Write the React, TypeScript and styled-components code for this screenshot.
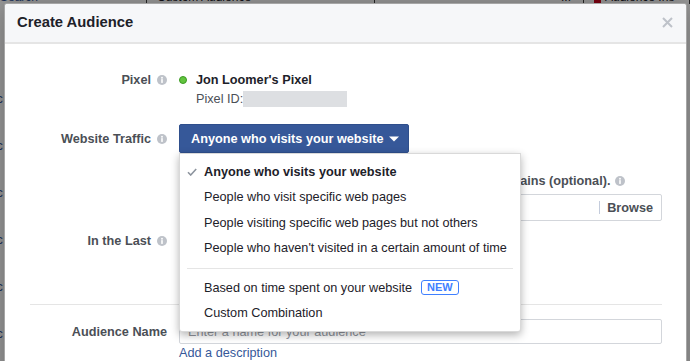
import React from "react";
import styled, { createGlobalStyle } from "styled-components";

const Global = createGlobalStyle`
  html, body { margin: 0; padding: 0; width: 690px; height: 361px; overflow: hidden; }
  body { font-family: "Liberation Sans", Arial, Helvetica, sans-serif; background: #fff; }
  * { box-sizing: border-box; }
`;

const Page = styled.div`
  position: relative;
  width: 690px;
  height: 361px;
  overflow: hidden;
  background: #fff;
`;

const BgHeader = styled.div`
  display: grid;
  grid-template-columns: 147px 228px 209px 1fr;
  height: 13px;
  margin-top: -9px;
  font-size: 12px;
  line-height: 13px;
  color: #1d2129;
`;

const BgCell = styled.div<{ $first?: boolean; $end?: boolean }>`
  display: flex;
  align-items: center;
  justify-content: ${(p) => (p.$end ? "flex-end" : "flex-start")};
  gap: 4px;
  padding-left: ${(p) => (p.$first ? "0" : "10px")};
  padding-right: ${(p) => (p.$end ? "12px" : "0")};
  border-right: 1px solid #444;
  color: ${(p) => (p.$first ? "#365899" : "#1d2129")};
`;

const RedMark = styled.span`
  width: 7px;
  height: 10px;
  background: #d0021b;
`;

const BgList = styled.div`
  margin-top: 71px;
  display: flex;
  flex-direction: column;
`;

const BgRow = styled.div`
  height: 47px;
  display: flex;
  align-items: center;
  margin-left: -6px;
  font-size: 12px;
  color: #365899;
`;

const Backdrop = styled.div`
  position: absolute;
  inset: 0;
  background: rgba(0, 0, 0, 0.4);
`;

const Modal = styled.div`
  position: absolute;
  left: 4px;
  top: 3px;
  width: 683px;
  height: 420px;
  background: #fff;
  border: 1px solid rgba(0, 0, 0, 0.35);
  border-radius: 3px;
  box-shadow: 0 2px 26px rgba(0, 0, 0, 0.3);
`;

const Header = styled.div`
  height: 40px;
  display: flex;
  align-items: center;
  justify-content: space-between;
  padding: 0 13px 2px 12px;
  background: #f6f7f9;
  border-bottom: 2px solid #e5e5e5;
  border-radius: 3px 3px 0 0;
`;

const Title = styled.div`
  font-size: 14.8px;
  font-weight: bold;
  color: #1d2129;
`;

const Body = styled.div`
  padding: 28px 24px 0 25px;
  font-size: 12.7px;
  color: #1d2129;
`;

const FormRow = styled.div<{ $mt?: number }>`
  display: grid;
  grid-template-columns: 138px 1fr;
  column-gap: 11px;
  align-items: start;
  margin-top: ${(p) => p.$mt ?? 0}px;
`;

const Label = styled.div<{ $h: number }>`
  height: ${(p) => p.$h}px;
  display: flex;
  justify-content: flex-end;
  align-items: center;
  gap: 6px;
  padding-right: 1px;
  font-weight: bold;
  color: #4b4f56;
  white-space: nowrap;
`;

const Content = styled.div`
  display: flex;
  flex-direction: column;
  align-items: flex-start;
`;

const Line = styled.div<{ $indent?: number; $mt?: number; $bold?: boolean; $color?: string; $gap?: number }>`
  height: 16px;
  display: flex;
  align-items: center;
  gap: ${(p) => p.$gap ?? 0}px;
  padding-left: ${(p) => p.$indent ?? 0}px;
  margin-top: ${(p) => p.$mt ?? 0}px;
  font-weight: ${(p) => (p.$bold ? "bold" : "normal")};
  color: ${(p) => p.$color ?? "#1d2129"};
  white-space: nowrap;
`;

const Dot = styled.span`
  width: 8px;
  height: 8px;
  border-radius: 50%;
  background: #62c43f;
  border: 1px solid #3b9a22;
  margin-right: 9px;
`;

const RedactedId = styled.span`
  width: 104px;
  height: 16px;
  background: #dddfe2;
`;

const Anchor = styled.div`
  position: relative;
`;

const BlueButton = styled.div`
  height: 29px;
  display: flex;
  align-items: center;
  gap: 6px;
  padding: 0 9px 0 11px;
  background: #365899;
  border: 1px solid #2f4f8c;
  border-radius: 2px;
  color: #fff;
  font-weight: bold;
  white-space: nowrap;
`;

const Menu = styled.div`
  position: absolute;
  top: 100%;
  left: 0;
  width: 342px;
  padding: 5px 0;
  background: #fff;
  border: 1px solid rgba(0, 0, 0, 0.15);
  border-radius: 0 0 3px 3px;
  box-shadow: 0 3px 8px rgba(0, 0, 0, 0.3);
  z-index: 10;
`;

const MenuItem = styled.div<{ $selected?: boolean }>`
  height: 25.5px;
  display: flex;
  align-items: center;
  padding-left: 7px;
  font-weight: ${(p) => (p.$selected ? "bold" : "normal")};
  color: #1d2129;
  white-space: nowrap;
`;

const CheckSlot = styled.span`
  width: 10px;
  height: 10px;
  margin-right: 7px;
  display: flex;
  align-items: center;
`;

const MenuDivider = styled.div`
  height: 1px;
  margin: 7px 7px 6px;
  background: #e5e5e5;
`;

const NewBadge = styled.span`
  margin-left: 9px;
  height: 15px;
  line-height: 13px;
  padding: 0 5px;
  border: 1px solid #4080ff;
  border-radius: 3px;
  color: #4080ff;
  font-size: 11px;
  font-weight: bold;
`;

const InputGroup = styled.div<{ $h: number; $mt?: number }>`
  width: 100%;
  height: ${(p) => p.$h}px;
  margin-top: ${(p) => p.$mt ?? 0}px;
  display: flex;
  align-items: stretch;
  border: 1px solid #d3d6db;
  border-radius: 2px;
  background: #fff;
`;

const Field = styled.div`
  flex: 1;
  display: flex;
  align-items: center;
  padding-left: 8px;
  color: #90949c;
  white-space: nowrap;
  overflow: hidden;
`;

const Browse = styled.div`
  display: flex;
  align-items: center;
  margin: 6px 0;
  padding: 0 8px 0 7px;
  border-left: 1px solid #c4ccdc;
  font-weight: bold;
  color: #4b4f56;
`;

const SmallSelect = styled.div`
  height: 27px;
  width: 70px;
  display: flex;
  align-items: center;
  padding-left: 8px;
  border: 1px solid #d3d6db;
  border-radius: 2px;
  color: #1d2129;
`;

const Separator = styled.div`
  height: 1px;
  margin-top: 50px;
  background: #e5e5e5;
`;

const Link = styled.div`
  margin-top: 1px;
  height: 16px;
  line-height: 16px;
  color: #365899;
`;

const Info = () => (
  <svg width="10" height="10" viewBox="0 0 10 10">
    <circle cx="5" cy="5" r="5" fill="#bec2c9" />
    <circle cx="5" cy="2.7" r="0.95" fill="#fff" />
    <rect x="4.2" y="4.1" width="1.6" height="3.9" rx="0.4" fill="#fff" />
  </svg>
);

const Check = () => (
  <svg width="10" height="8" viewBox="0 0 10 8">
    <path d="M1 4.3 L3.7 7 L9.2 1" fill="none" stroke="#8d949e" strokeWidth="1.6" />
  </svg>
);

const Caret = () => (
  <svg width="10" height="6" viewBox="0 0 10 6">
    <path d="M0 0.5 L10 0.5 L5 5.5 Z" fill="#fff" />
  </svg>
);

const Close = () => (
  <svg width="11" height="11" viewBox="0 0 11 11">
    <path d="M1 1 L10 10 M10 1 L1 10" stroke="#bec2c9" strokeWidth="2" />
  </svg>
);

const options: { text: string; selected?: boolean; isNew?: boolean; divider?: boolean }[] = [
  { text: "Anyone who visits your website", selected: true },
  { text: "People who visit specific web pages" },
  { text: "People visiting specific web pages but not others" },
  { text: "People who haven't visited in a certain amount of time" },
  { text: "", divider: true },
  { text: "Based on time spent on your website", isNew: true },
  { text: "Custom Combination" },
];

export default function App() {
  return (
    <Page>
      <Global />
      <BgHeader>
        <BgCell $first>Search</BgCell>
        <BgCell>Custom Audience</BgCell>
        <BgCell $end>...</BgCell>
        <BgCell>
          <RedMark />
          Audience Ins
        </BgCell>
      </BgHeader>
      <BgList>
        {["ic", "ic", "ic", "ic", "ic", "ic"].map((t, i) => (
          <BgRow key={i}>{t}</BgRow>
        ))}
      </BgList>
      <Backdrop />
      <Modal>
        <Header>
          <Title>Create Audience</Title>
          <Close />
        </Header>
        <Body>
          <FormRow>
            <Label $h={16}>
              Pixel <Info />
            </Label>
            <Content>
              <Line $bold>
                <Dot />
                Jon Loomer's Pixel
              </Line>
              <Line $indent={17} $mt={3} $color="#4b4f56" $gap={0}>
                Pixel ID:
                <RedactedId />
              </Line>
            </Content>
          </FormRow>

          <FormRow $mt={17}>
            <Label $h={29}>
              Website Traffic <Info />
            </Label>
            <Content>
              <Anchor>
                <BlueButton>
                  Anyone who visits your website
                  <Caret />
                </BlueButton>
                <Menu>
                  {options.map((o, i) =>
                    o.divider ? (
                      <MenuDivider key={i} />
                    ) : (
                      <MenuItem key={i} $selected={o.selected}>
                        <CheckSlot>{o.selected && <Check />}</CheckSlot>
                        {o.text}
                        {o.isNew && <NewBadge>NEW</NewBadge>}
                      </MenuItem>
                    )
                  )}
                </Menu>
              </Anchor>
            </Content>
          </FormRow>

          <FormRow $mt={20}>
            <div />
            <Content>
              <Line $bold $color="#4b4f56" $gap={5}>
                Include people who visited all of your other website domains (optional).
                <Info />
              </Line>
              <InputGroup $h={27} $mt={5}>
                <Field>Enter a domain</Field>
                <Browse>Browse</Browse>
              </InputGroup>
            </Content>
          </FormRow>

          <FormRow $mt={6}>
            <Label $h={27}>
              In the Last <Info />
            </Label>
            <Content>
              <SmallSelect>30 days</SmallSelect>
            </Content>
          </FormRow>

          <Separator />

          <FormRow $mt={14}>
            <Label $h={25}>Audience Name</Label>
            <Content>
              <InputGroup $h={25}>
                <Field>Enter a name for your audience</Field>
              </InputGroup>
              <Link>Add a description</Link>
            </Content>
          </FormRow>
        </Body>
      </Modal>
    </Page>
  );
}
